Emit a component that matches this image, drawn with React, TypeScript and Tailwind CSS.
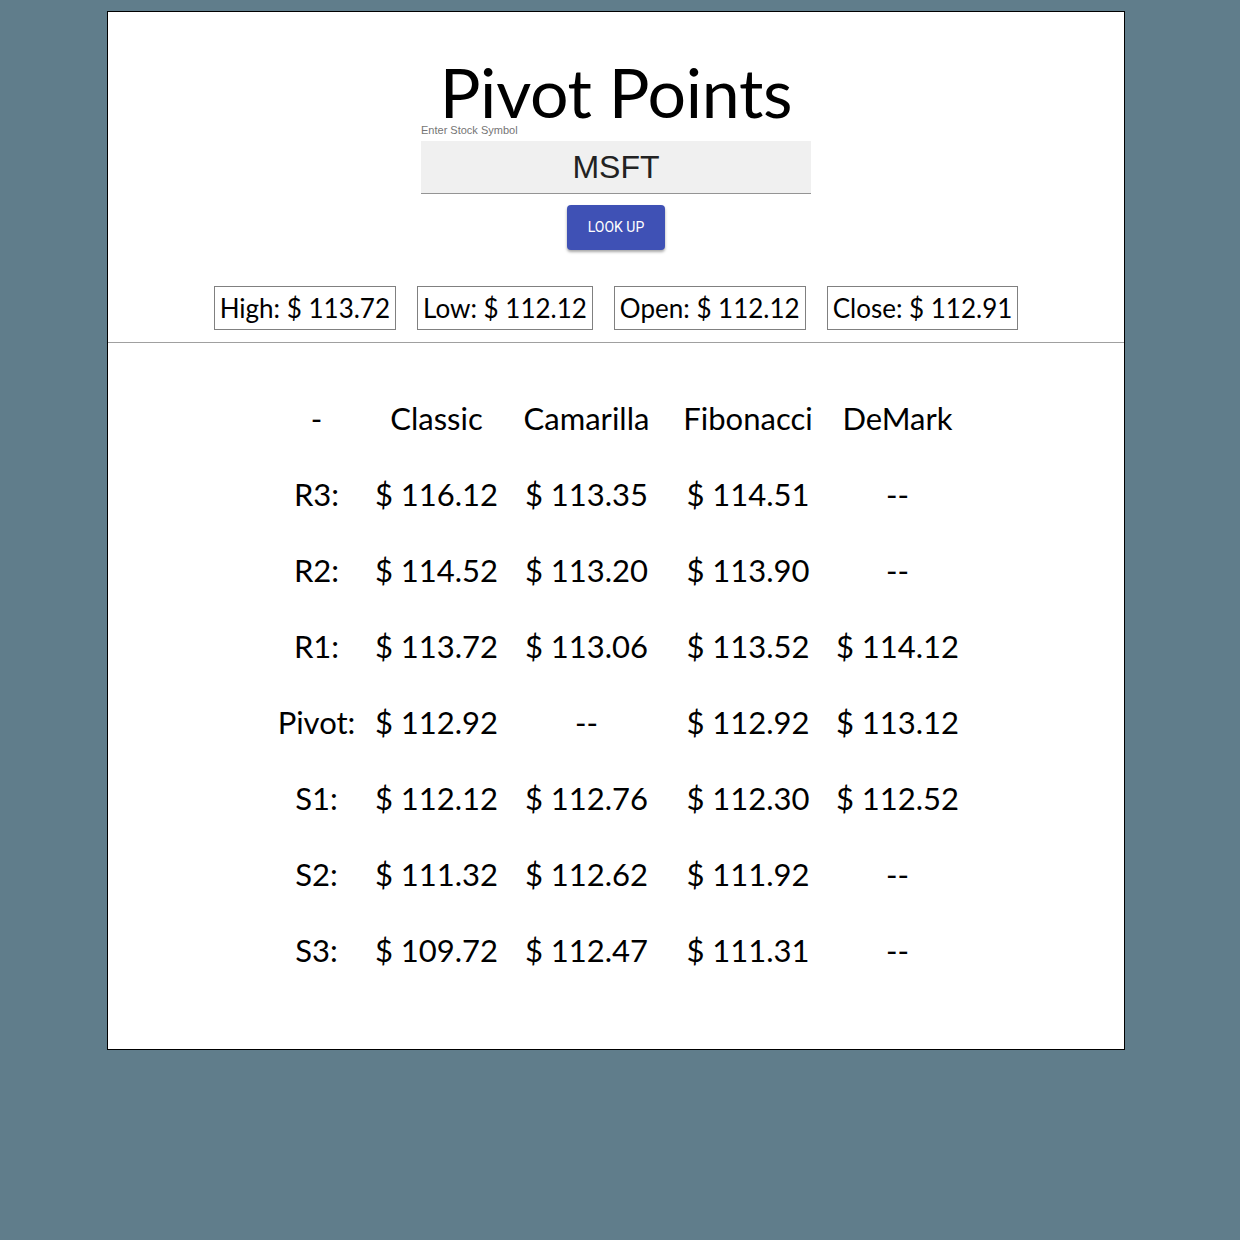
import React from "react";

const rows: [string, string, string, string, string][] = [
  ["R3:", "$ 116.12", "$ 113.35", "$ 114.51", "--"],
  ["R2:", "$ 114.52", "$ 113.20", "$ 113.90", "--"],
  ["R1:", "$ 113.72", "$ 113.06", "$ 113.52", "$ 114.12"],
  ["Pivot:", "$ 112.92", "--", "$ 112.92", "$ 113.12"],
  ["S1:", "$ 112.12", "$ 112.76", "$ 112.30", "$ 112.52"],
  ["S2:", "$ 111.32", "$ 112.62", "$ 111.92", "--"],
  ["S3:", "$ 109.72", "$ 112.47", "$ 111.31", "--"],
];

const stats = [
  ["High:", "$ 113.72"],
  ["Low:", "$ 112.12"],
  ["Open:", "$ 112.12"],
  ["Close:", "$ 112.91"],
];

const headers: [string, string][] = [
  ["-", "w-[100px]"],
  ["Classic", "w-[140px]"],
  ["Camarilla", "w-[160px]"],
  ["Fibonacci", "w-[163px]"],
  ["DeMark", "w-[136px]"],
];

export default function App() {
  return (
    <div className="min-h-[1240px] w-full bg-[#607d8b] pt-[11px] font-['Lato',sans-serif] text-black">
      <div className="ml-[107px] w-[1018px] h-[1039px] border border-black bg-white flex flex-col items-center">
        <h1 className="mt-[50px] text-[68px] leading-[60px] h-[60px] font-normal tracking-[-0.3px]">Pivot Points</h1>
        <div className="w-[390px] flex flex-col mt-[2px]">
          <div className="text-[11px] leading-[13px] text-[#757575] font-['Liberation_Sans',Arial,sans-serif]">
            Enter Stock Symbol
          </div>
          <div className="mt-[4px] h-[53px] bg-[#f0f0f0] border-b border-[#949494] flex items-center justify-center text-[32px] text-[#222] font-['Liberation_Sans',Arial,sans-serif]">
            MSFT
          </div>
        </div>
        <button className="mt-[11px] w-[98px] h-[45px] rounded-[4px] bg-[#3f51b5] text-white text-[14px] font-['Roboto',sans-serif] shadow-[0_2px_3px_rgba(0,0,0,0.35)]">
          LOOK UP
        </button>
        <div className="mt-[36px] flex gap-[21px]">
          {stats.map(([l, v]) => (
            <div
              key={l}
              className="h-[44px] border border-[#808080] px-[5px] flex items-center text-[26px] leading-none"
            >
              {l}&nbsp;{v}
            </div>
          ))}
        </div>
        <div className="mt-[12px] w-full h-px bg-[#a0a0a0]" />
        <table className="mt-[37px] text-[31px] border-collapse table-fixed">
          <thead>
            <tr className="h-[76px]">
              {headers.map(([h, w]) => (
                <th key={h} className={`font-normal text-center ${w}`}>
                  {h}
                </th>
              ))}
            </tr>
          </thead>
          <tbody>
            {rows.map((r) => (
              <tr key={r[0]} className="h-[76px]">
                {r.map((c, i) => (
                  <td key={i} className="text-center whitespace-nowrap">
                    {c}
                  </td>
                ))}
              </tr>
            ))}
          </tbody>
        </table>
      </div>
    </div>
  );
}
